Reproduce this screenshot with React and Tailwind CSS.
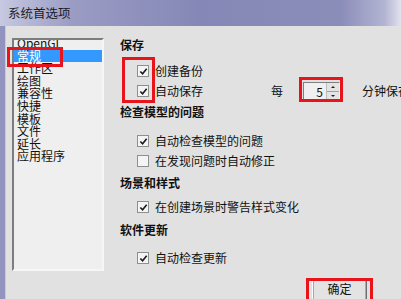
import React from "react";

const NAV_ITEMS = ["OpenGL", "常规", "工作区", "绘图", "兼容性", "快捷", "模板", "文件", "延长", "应用程序"];

function Check({ checked }) {
  return (
    <span className="w-[12px] h-[12px] border border-[#8e8f8f] bg-[#f4f4f4] flex items-center justify-center shrink-0">
      {checked && (
        <svg viewBox="0 0 10 10" className="w-[9px] h-[9px]">
          <path d="M1.5 5 L4 7.5 L8.5 2" fill="none" stroke="#1a1a1a" strokeWidth="1.8" />
        </svg>
      )}
    </span>
  );
}

function Row({ checked, label, className = "", children }) {
  return (
    <div className={`h-[20px] flex items-center pl-[19px] ${className}`}>
      <Check checked={checked} />
      <span className="ml-[6px] text-[12px] leading-[20px] text-[#111] whitespace-nowrap">{label}</span>
      {children}
    </div>
  );
}

function Heading({ label, className = "" }) {
  return (
    <div className={`h-[16px] leading-[16px] pl-[2px] text-[12px] font-bold text-[#111] ${className}`}>{label}</div>
  );
}

function Rule({ className = "" }) {
  return <div className={`h-px bg-[#a6a6a6] ${className}`} />;
}

function RedBox({ className }) {
  return <div className={`absolute border-[3px] border-[#e8141c] pointer-events-none ${className}`} />;
}

export default function App() {
  return (
    <div className="relative w-[401px] h-[299px] overflow-hidden bg-[#e1e1e1] font-['Noto_Sans_CJK_SC',sans-serif]">
      {/* Title bar */}
      <div className="h-[26px] flex items-center pl-[8px] bg-[linear-gradient(90deg,#c6c9e0_0%,#9a9cc4_18%,#8587b6_50%,#8b8db9_85%,#b3b5d3_96%,#e2e2ee_100%)]">
        <span className="text-[12.5px] text-[#1c1c28]">系统首选项</span>
      </div>

      <div className="flex h-[273px]">
        {/* window edge */}
        <div className="w-[6px] shrink-0 bg-[#9293bf] border-r border-[#c9c9dc]" />

        {/* Category list */}
        <div className="ml-[6px] mt-[12px] w-[92px] h-[233px] shrink-0 border-2 border-t-[#7d7d7d] border-l-[#7d7d7d] border-b-[#f6f6f6] border-r-[#f6f6f6] bg-[#efefef] overflow-hidden">
          <div className="-mt-[3px]">
            {NAV_ITEMS.map((item, i) => (
              <div
                key={item}
                className={`h-[12.6px] leading-[12.6px] pl-[3px] text-[12px] whitespace-nowrap ${
                  i === 1 ? "bg-[#3399ff] text-white" : "text-[#111]"
                }`}
              >
                {item}
              </div>
            ))}
          </div>
        </div>

        {/* Settings panel */}
        <div className="ml-[14px] flex-1 min-w-0 flex flex-col pt-[11px]">
          <Heading label="保存" />
          <Rule className="mt-[3px]" />
          <Row checked label="创建备份" className="mt-[5px]" />
          <Row checked label="自动保存">
            <span className="ml-[68px] text-[12px] text-[#111]">每</span>
            <div className="ml-[20px] w-[37px] h-[19px] shrink-0 flex border border-t-[#808080] border-l-[#808080] border-b-[#f4f4f4] border-r-[#f4f4f4] bg-[#f0f0f0]">
              <span className="flex-1 text-right pr-[3px] text-[12px] leading-[17px] text-[#111]">5</span>
              <div className="w-[13px] flex flex-col border-l border-[#bdbdbd]">
                <div className="flex-1 flex items-center justify-center bg-[#e4e4e4] border-b border-[#a0a0a0]">
                  <span className="w-0 h-0 border-x-[2px] border-x-transparent border-b-[2px] border-b-[#222]" />
                </div>
                <div className="flex-1 flex items-center justify-center bg-[#e4e4e4]">
                  <span className="w-0 h-0 border-x-[2px] border-x-transparent border-t-[2px] border-t-[#222]" />
                </div>
              </div>
            </div>
            <span className="ml-[22px] text-[12px] text-[#111] whitespace-nowrap">分钟保存</span>
          </Row>

          <Heading label="检查模型的问题" className="mt-[3px]" />
          <Rule className="mt-[4px]" />
          <Row checked label="自动检查模型的问题" className="mt-[7px]" />
          <Row checked={false} label="在发现问题时自动修正" />

          <Heading label="场景和样式" className="mt-[4px]" />
          <Rule className="mt-[3px]" />
          <Row checked label="在创建场景时警告样式变化" className="mt-[3px]" />

          <Heading label="软件更新" className="mt-[5px]" />
          <Rule className="mt-[3px]" />
          <Row checked label="自动检查更新" className="mt-[7px]" />

          <div className="mt-[10px] ml-[194px] w-[55px] h-[24px] shrink-0 border border-t-[#fafafa] border-l-[#fafafa] border-b-[#6f6f6f] border-r-[#6f6f6f] bg-[#e3e3e3] flex justify-center pt-[3px] shadow-[inset_0_0_0_1px_#a9a9a9]">
            <span className="text-[12px] leading-[14px] text-[#111]">确定</span>
          </div>
        </div>
      </div>

      {/* Annotation boxes */}
      <RedBox className="left-[7px] top-[47px] w-[56px] h-[20px]" />
      <RedBox className="left-[122px] top-[57px] w-[33px] h-[46px]" />
      <RedBox className="left-[299px] top-[77px] w-[44px] h-[25px]" />
      <RedBox className="left-[306px] top-[278px] w-[67px] h-[24px]" />
    </div>
  );
}
